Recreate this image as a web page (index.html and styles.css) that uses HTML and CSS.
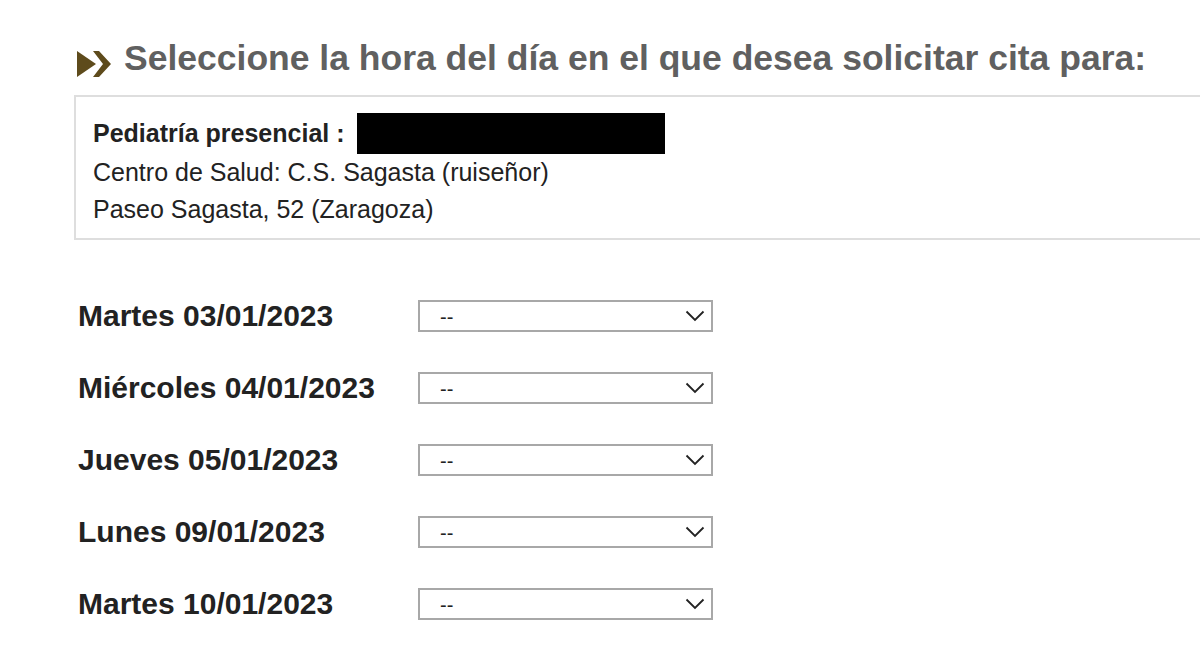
FILE: index.html
```html
<!DOCTYPE html>
<html lang="es">
<head>
<meta charset="utf-8">
<title>Cita</title>
<link rel="stylesheet" href="styles.css">
</head>
<body>
<div class="page">
  <h1 class="title">
    <svg class="arrows" width="34" height="28" viewBox="0 0 34 28"><path d="M0 1 L19 14 L0 27 Z" fill="#5e4b1c"/><path d="M16 1 L22 1 L34 14 L22 27 L16 27 L26 14 Z" fill="#5e4b1c"/></svg>
    <span>Seleccione la hora del día en el que desea solicitar cita para:</span>
  </h1>
  <div class="info">
    <div class="line line-first"><b>Pediatría presencial :</b><span class="redact"></span></div>
    <div class="line">Centro de Salud: C.S. Sagasta (ruiseñor)</div>
    <div class="line">Paseo Sagasta, 52 (Zaragoza)</div>
  </div>
  <div class="days">
    <div class="day"><span class="label">Martes 03/01/2023</span><div class="sel"><select><option>--</option></select><svg class="chev" width="20" height="12" viewBox="0 0 20 12"><path d="M1.5 1.5 L10 10 L18.5 1.5" fill="none" stroke="#222" stroke-width="1.8"/></svg></div></div>
    <div class="day"><span class="label">Miércoles 04/01/2023</span><div class="sel"><select><option>--</option></select><svg class="chev" width="20" height="12" viewBox="0 0 20 12"><path d="M1.5 1.5 L10 10 L18.5 1.5" fill="none" stroke="#222" stroke-width="1.8"/></svg></div></div>
    <div class="day"><span class="label">Jueves 05/01/2023</span><div class="sel"><select><option>--</option></select><svg class="chev" width="20" height="12" viewBox="0 0 20 12"><path d="M1.5 1.5 L10 10 L18.5 1.5" fill="none" stroke="#222" stroke-width="1.8"/></svg></div></div>
    <div class="day"><span class="label">Lunes 09/01/2023</span><div class="sel"><select><option>--</option></select><svg class="chev" width="20" height="12" viewBox="0 0 20 12"><path d="M1.5 1.5 L10 10 L18.5 1.5" fill="none" stroke="#222" stroke-width="1.8"/></svg></div></div>
    <div class="day"><span class="label">Martes 10/01/2023</span><div class="sel"><select><option>--</option></select><svg class="chev" width="20" height="12" viewBox="0 0 20 12"><path d="M1.5 1.5 L10 10 L18.5 1.5" fill="none" stroke="#222" stroke-width="1.8"/></svg></div></div>
  </div>
</div>
</body>
</html>
```
FILE: styles.css
```css
html, body {
  margin: 0;
  padding: 0;
  background: #fff;
}
body {
  font-family: "Liberation Sans", Arial, sans-serif;
  overflow: hidden;
}
.page {
  width: 1200px;
  height: 659px;
  overflow: hidden;
}
.title {
  margin: 0;
  padding: 38px 0 0 77px;
  display: flex;
  align-items: flex-start;
  gap: 13px;
  font-size: 35.5px;
  font-weight: bold;
  color: #606060;
  line-height: 40px;
  height: 40px;
  white-space: nowrap;
}
.arrows {
  flex: none;
  margin-top: 12px;
}
.info {
  margin: 17px 0 0 74px;
  width: 1200px;
  height: 145px;
  border: 2px solid #dedede;
  padding: 16px 0 0 17px;
  box-sizing: border-box;
  font-size: 25px;
  color: #222;
}
.line {
  height: 37px;
  line-height: 37px;
}
.line-first {
  height: 41px;
  line-height: 41px;
  display: flex;
  align-items: center;
}
.line-first b {
  color: #222;
}
.redact {
  display: inline-block;
  width: 308px;
  height: 41px;
  background: #000;
  margin-left: 12px;
}
.days {
  padding: 60px 0 0 78px;
  display: flex;
  flex-direction: column;
  gap: 40px;
}
.day {
  display: flex;
  align-items: center;
  height: 32px;
}
.label {
  width: 340px;
  font-size: 30px;
  font-weight: bold;
  color: #222;
  white-space: nowrap;
}
.sel {
  position: relative;
  width: 295px;
  height: 32px;
}
.sel select {
  appearance: none;
  -webkit-appearance: none;
  width: 100%;
  height: 100%;
  border: 2px solid #a8a8a8;
  border-radius: 0;
  background: #fff;
  font-family: "Liberation Sans", Arial, sans-serif;
  font-size: 20px;
  color: #222;
  padding: 2px 0 0 20px;
  margin: 0;
}
.chev {
  position: absolute;
  right: 8px;
  top: 10px;
  pointer-events: none;
}
```
